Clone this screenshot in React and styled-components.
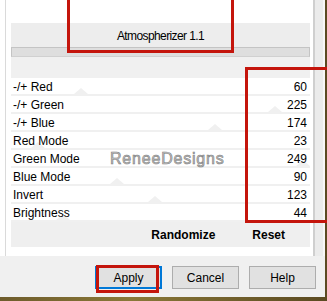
import styled, { createGlobalStyle } from 'styled-components'

const GlobalStyle = createGlobalStyle`
  html, body { margin: 0; padding: 0; background: #fff; }
  body { font-family: "Liberation Sans", Arial, sans-serif; }
  * { box-sizing: border-box; }
`

const sliders = [
  { label: '-/+ Red', value: 60 },
  { label: '-/+ Green', value: 225 },
  { label: '-/+ Blue', value: 174 },
  { label: 'Red Mode', value: 23 },
  { label: 'Green Mode', value: 249 },
  { label: 'Blue Mode', value: 90 },
  { label: 'Invert', value: 123 },
  { label: 'Brightness', value: 44 }
]

const App = () => {
  return (
    <Window>
      <GlobalStyle />
      <Inner>
        <Upper>
          <Frame>
            <Panel>
              <Header>Atmospherizer 1.1</Header>
              <Track />
              <Spacer />
              {sliders.map((s) => (
                <Row key={s.label}>
                  {/* ghost of the slider thumb, placed from the value */}
                  <Thumb style={{ left: `${(s.value / 255) * 299 - 7}px` }} />
                  <Label>{s.label}</Label>
                  <Value>{s.value}</Value>
                </Row>
              ))}
              <ActionBar>
                <span>Randomize</span>
                <span>Reset</span>
              </ActionBar>
            </Panel>
          </Frame>
          <Side />
        </Upper>
        <Footer>
          <Button $focused>Apply</Button>
          <Button>Cancel</Button>
          <Button>Help</Button>
        </Footer>
      </Inner>

      <Watermark>ReneeDesigns</Watermark>
      <Mark style={{ left: 67, top: -5, width: 167, height: 58 }} />
      <Mark style={{ left: 245, top: 67, width: 100, height: 156 }} />
      <Mark style={{ left: 96, top: 265, width: 63, height: 28 }} />
    </Window>
  )
}

export default App

// ---------- styled-components ----------

const Window = styled.div`
  position: relative;
  width: 327px;
  height: 301px;
  overflow: hidden;
  background: linear-gradient(90deg, #6e5c2c, #8a7838 40%, #5b4a22);
  font-family: "Liberation Sans", Arial, sans-serif;
  font-size: 12px;
  color: #000;
`

const Inner = styled.div`
  width: 325px;
  height: 297px;
  display: flex;
  flex-direction: column;
`

const Upper = styled.div`
  display: flex;
  height: 256px;
  background: #fff;
`

const Frame = styled.div`
  width: 308px;
  margin-left: 5px;
  border-left: 1px solid #dadada;
  padding: 23px 3px 9px 5px;
`

const Side = styled.div`
  flex: 1;
  border-left: 2px solid #cfcfcf;
  border-right: 2px solid #f7f7f7;
  background: #ebebeb;
`

const Panel = styled.div`
  width: 299px;
  display: flex;
  flex-direction: column;
`

const Header = styled.div`
  height: 24px;
  background: #ededed;
  display: flex;
  align-items: center;
  justify-content: center;
  padding-top: 1px;
  letter-spacing: -0.6px;
`

const Track = styled.div`
  height: 10px;
  background: #dedede;
  border: 1px solid #c4c4c4;
  border-bottom-color: #d0d0d0;
`

const Spacer = styled.div`
  height: 21px;
  background: #f0f0f0;
`

const Row = styled.div`
  position: relative;
  height: 18px;
  display: flex;
  align-items: center;
  justify-content: space-between;
  padding: 1px 3px 0 2px;
  background: #fff;
  border-bottom: 2px solid #f0f0f0;
`

const Thumb = styled.div`
  position: absolute;
  bottom: 0;
  width: 0;
  height: 0;
  border-left: 7px solid transparent;
  border-right: 7px solid transparent;
  border-bottom: 6px solid #f0f0f0;
`

const Label = styled.span`
  position: relative;
`

const Value = styled.span`
  position: relative;
`

const ActionBar = styled.div`
  height: 25px;
  background: #efefef;
  display: flex;
  align-items: center;
  justify-content: flex-end;
  gap: 37px;
  padding: 1px 25px 0 0;
  font-weight: 700;
`

const Footer = styled.div`
  flex: 1;
  background: #f0f0f0;
  display: flex;
  justify-content: flex-end;
  align-items: flex-start;
  gap: 10px;
  padding: 10px 9px 0 0;
`

const Button = styled.div`
  width: 67px;
  height: 23px;
  display: flex;
  align-items: center;
  justify-content: center;
  background: #e1e1e1;
  border: 1px solid ${(p) => (p.$focused ? '#0078d7' : '#adadad')};
  box-shadow: ${(p) => (p.$focused ? 'inset 0 0 0 1px #0078d7' : 'none')};
`

const Watermark = styled.div`
  position: absolute;
  left: 110px;
  top: 150px;
  font-size: 16px;
  letter-spacing: 0.8px;
  color: #c4c4c4;
  -webkit-text-stroke: 0.6px #7c7c7c;
`

const Mark = styled.div`
  position: absolute;
  border: 3px solid #c4150c;
  pointer-events: none;
`
